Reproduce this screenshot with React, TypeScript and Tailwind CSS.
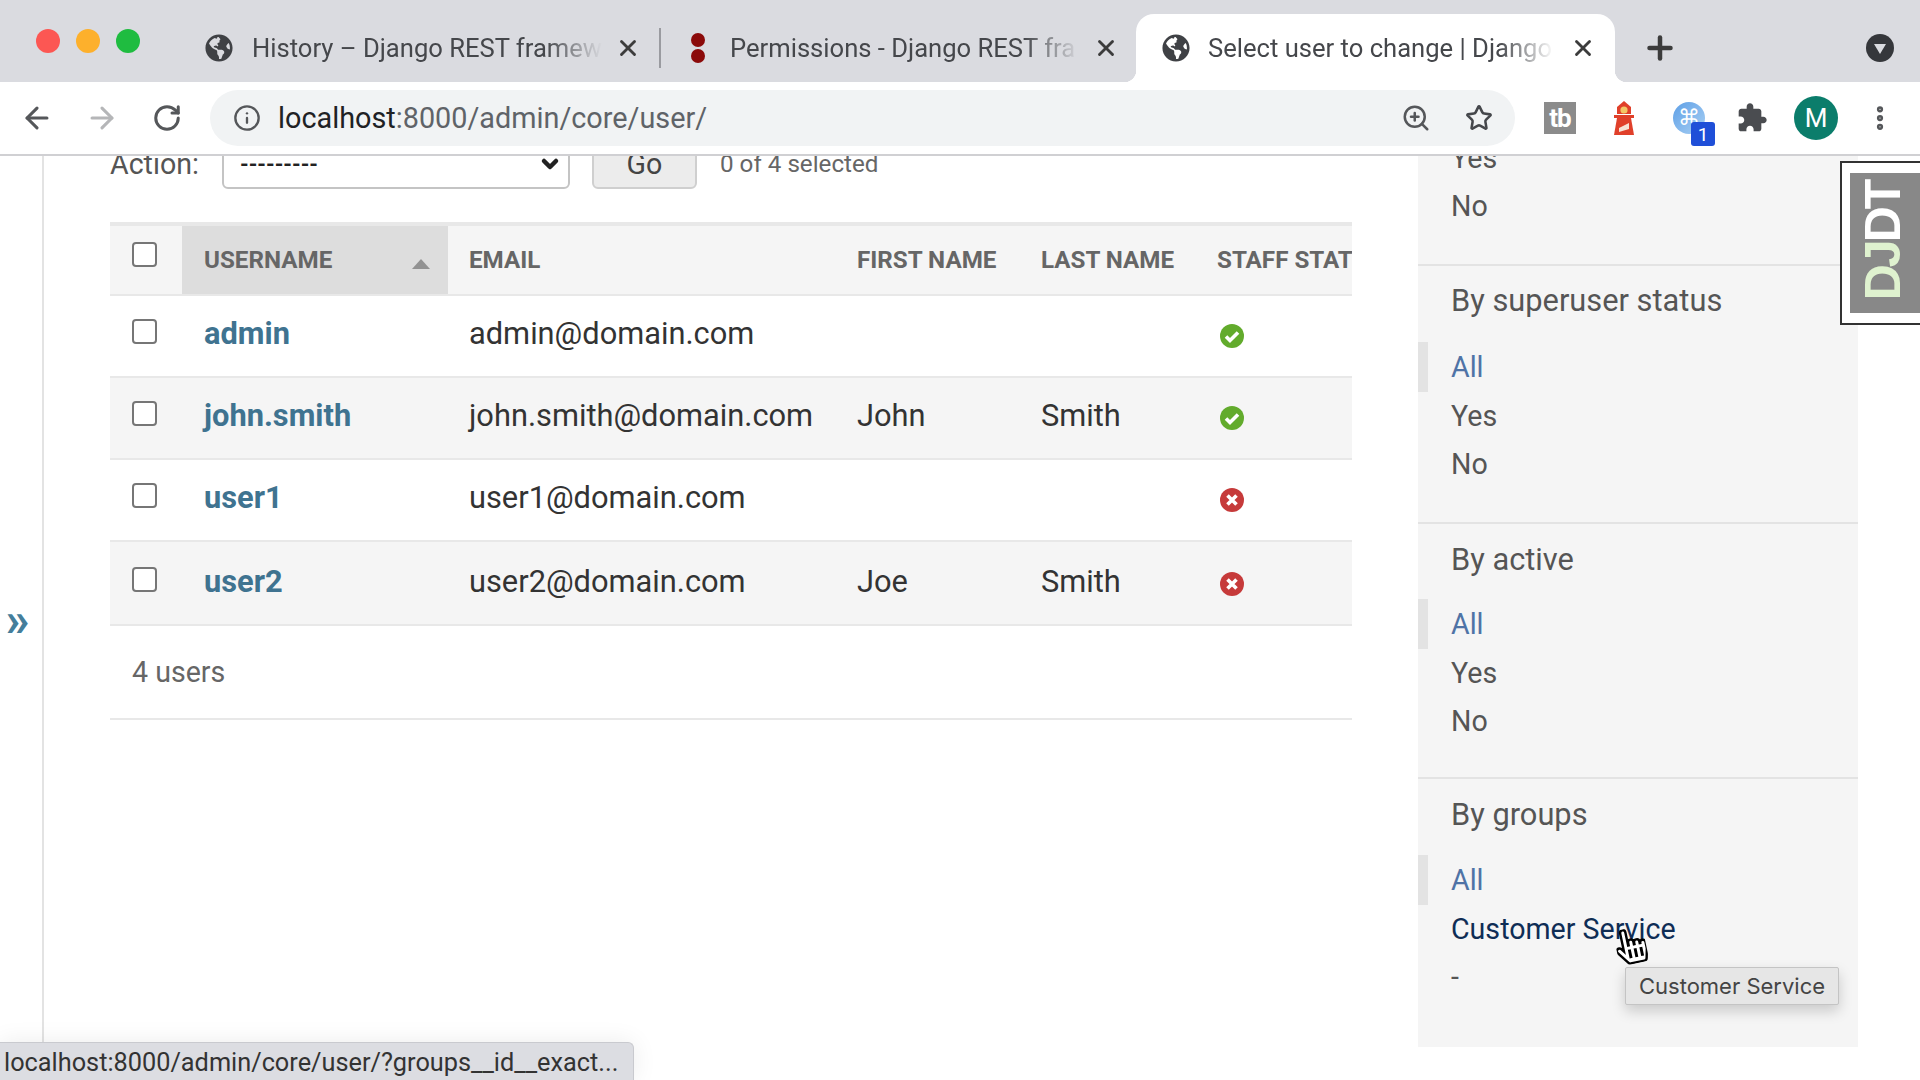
import React from "react";
import { ArrowLeft, ArrowRight, RotateCw, Info, ZoomIn, Star, X, Plus, EllipsisVertical, ChevronDown } from "lucide-react";
import { FaGlobeAmericas, FaHandPointer } from "react-icons/fa";

const fade = "[mask-image:linear-gradient(to_right,black_84%,transparent)]";

function Globe() {
  return <FaGlobeAmericas className="w-[28px] h-[28px] shrink-0 text-[#3f4145]" />;
}

function YesIcon() {
  return (
    <svg viewBox="0 0 24 24" className="w-[24px] h-[24px]">
      <circle cx="12" cy="12" r="12" fill="#62ab2c" />
      <path d="M6 12.5l4 4 8-8" fill="none" stroke="#fff" strokeWidth="3.6" />
    </svg>
  );
}

function NoIcon() {
  return (
    <svg viewBox="0 0 24 24" className="w-[24px] h-[24px]">
      <circle cx="12" cy="12" r="12" fill="#c63a3a" />
      <path d="M7.5 7.5l9 9M16.5 7.5l-9 9" fill="none" stroke="#fff" strokeWidth="3.6" />
    </svg>
  );
}

function Check() {
  return <div className="w-[25px] h-[25px] rounded-[4px] border-2 border-[#767676] bg-white" />;
}

const rowGrid = "grid grid-cols-[72px_266px_409px_184px_176px_135px] items-center";

function Row({ name, email, first, last, ok, h, bg, pb }: { name: string; email: string; first: string; last: string; ok: boolean; h: string; bg: string; pb: string }) {
  return (
    <div className={`${rowGrid} ${h} ${bg} ${pb} border-b-2 border-[#e8e8e8] text-[30.8px] text-[#333]`}>
      <div className="pl-[22px] -mt-[6px]"><Check /></div>
      <a className="pl-[22px] font-bold text-[#3f7390]">{name}</a>
      <div className="pl-[21px] whitespace-nowrap">{email}</div>
      <div>{first}</div>
      <div>{last}</div>
      <div className="pl-[3px] pt-[4px]">{ok ? <YesIcon /> : <NoIcon />}</div>
    </div>
  );
}

function Item({ children, sel, cls }: { children: React.ReactNode; sel?: boolean; cls?: string }) {
  return (
    <div className={`flex items-center text-[28.6px] ${sel ? "h-[50px] border-l-[10px] border-[#e3e3e3] pl-[23px] text-[#4f73a6]" : `h-[48px] pl-[33px] ${cls ?? "text-[#555]"}`}`}>
      {children}
    </div>
  );
}

function Heading({ children }: { children: React.ReactNode }) {
  return <div className="h-[48px] flex items-center pl-[33px] text-[30.8px] text-[#555]">{children}</div>;
}

export default function App() {
  return (
    <div className="w-[1920px] h-[1080px] overflow-hidden bg-white relative font-['Roboto',sans-serif]">
      {/* tab strip */}
      <div className="h-[82px] bg-[#dadbe0] flex items-end">
        <div className="w-[186px] h-full flex gap-[16px] pl-[36px] pt-[29px]">
          <div className="w-[24px] h-[24px] rounded-full bg-[#fc5753]" />
          <div className="w-[24px] h-[24px] rounded-full bg-[#fdb02c]" />
          <div className="w-[24px] h-[24px] rounded-full bg-[#1fbc40]" />
        </div>
        <div className="w-[473px] h-[68px] flex items-center pl-[19px] text-[25.6px] text-[#45474b]">
          <Globe />
          <div className={`ml-[19px] w-[350px] overflow-hidden whitespace-nowrap ${fade}`}>History – Django REST framew</div>
          <X className="ml-[13px] w-[26px] h-[26px] shrink-0 text-[#3c3c3c]" strokeWidth={2.6} />
        </div>
        <div className="w-[477px] h-[68px] flex items-center text-[25.6px] text-[#45474b]">
          <div className="w-[2px] h-[40px] bg-[#9a9ba0] shrink-0" />
          <div className="ml-[30px] w-[14px] flex flex-col gap-[2px] shrink-0">
            <div className="h-[14px] rounded-full bg-[#8b0a0a]" />
            <div className="h-[14px] rounded-full bg-[#8b0a0a]" />
          </div>
          <div className={`ml-[25px] w-[350px] overflow-hidden whitespace-nowrap ${fade}`}>Permissions - Django REST fra</div>
          <X className="ml-[13px] w-[26px] h-[26px] shrink-0 text-[#3c3c3c]" strokeWidth={2.6} />
        </div>
        <div className="relative w-[479px] h-[68px] rounded-t-[18px] bg-white flex items-center pl-[26px] text-[25.6px] text-[#45474b] before:absolute before:bottom-0 before:-left-[12px] before:w-[12px] before:h-[12px] before:bg-[radial-gradient(circle_at_0_0,transparent_12px,white_12.5px)] after:absolute after:bottom-0 after:-right-[12px] after:w-[12px] after:h-[12px] after:bg-[radial-gradient(circle_at_100%_0,transparent_12px,white_12.5px)]">
          <Globe />
          <div className={`ml-[18px] w-[346px] overflow-hidden whitespace-nowrap ${fade}`}>Select user to change | Django</div>
          <X className="ml-[16px] w-[26px] h-[26px] shrink-0 text-[#3c3c3c]" strokeWidth={2.6} />
        </div>
        <div className="h-[68px] flex items-center ml-[27px]">
          <Plus className="w-[36px] h-[36px] text-[#3c3c3c]" strokeWidth={3} />
        </div>
        <div className="h-[68px] flex items-center ml-[188px]">
          <svg viewBox="0 0 28 28" className="w-[28px] h-[28px]">
            <circle cx="14" cy="14" r="14" fill="#35373b" />
            <path d="M8 10h12l-6 10z" fill="#dadbe0" />
          </svg>
        </div>
      </div>

      {/* toolbar */}
      <div className="h-[74px] bg-white border-b-2 border-[#d0d0d3] flex items-center">
        <div className="ml-[5px] w-[64px] flex justify-center"><ArrowLeft className="w-[34px] h-[34px] text-[#55575a]" strokeWidth={2.2} /></div>
        <div className="w-[66px] flex justify-center"><ArrowRight className="w-[34px] h-[34px] text-[#b5b6b8]" strokeWidth={2.2} /></div>
        <div className="w-[64px] flex justify-center"><RotateCw className="w-[30px] h-[30px] text-[#55575a]" strokeWidth={2.4} /></div>
        <div className="ml-[11px] w-[1305px] h-[56px] rounded-full bg-[#f1f3f4] flex items-center pl-[23px] pr-[22px]">
          <Info className="w-[28px] h-[28px] text-[#55575a]" strokeWidth={2} />
          <div className="ml-[17px] pt-[2px] flex-1 text-[28.8px] text-[#5f6368] whitespace-nowrap"><span className="text-[#202124]">localhost</span>:8000/admin/core/user/</div>
          <ZoomIn className="w-[30px] h-[30px] text-[#55575a]" strokeWidth={2} />
          <Star className="ml-[34px] w-[28px] h-[28px] text-[#45474b]" strokeWidth={2.2} />
        </div>
        <div className="ml-[29px] w-[32px] h-[32px] bg-[#8b8b8b] flex items-center justify-center text-white font-bold text-[26px] tracking-[-1px] leading-none">tb</div>
        <div className="ml-[32px] w-[32px] flex justify-center">
          <svg viewBox="0 0 24 34" className="w-[24px] h-[34px]">
            <path d="M12 0l7 6v7H5V6z" fill="#e0402a" />
            <circle cx="12" cy="9" r="3.6" fill="#f3c766" />
            <path d="M2 14h20v3H2z" fill="#e0402a" />
            <path d="M5 17h14l3 17H2z" fill="#e0402a" />
            <path d="M7 27l10-5v6l-10 3z" fill="#f6e3d6" />
          </svg>
        </div>
        <div className="relative ml-[33px] w-[32px] h-[32px] rounded-full bg-gradient-to-br from-[#5d9fe6] to-[#a9d0f3] flex items-center justify-center text-white text-[22px] leading-none">
          ⌘
          <div className="absolute left-[18px] top-[20px] w-[24px] h-[24px] rounded-[3px] bg-[#1f4fd8] flex items-center justify-center text-[19px] text-white">1</div>
        </div>
        <svg viewBox="0 0 24 24" className="ml-[31px] w-[32px] h-[32px]" fill="#4a4c50">
          <path d="M20.5 11H19V7c0-1.1-.9-2-2-2h-4V3.5C13 2.12 11.88 1 10.5 1S8 2.12 8 3.5V5H4c-1.1 0-1.99.9-1.99 2v3.8H3.5c1.49 0 2.7 1.21 2.7 2.7s-1.21 2.7-2.7 2.7H2V20c0 1.1.9 2 2 2h3.8v-1.5c0-1.49 1.21-2.7 2.7-2.7 1.49 0 2.7 1.21 2.7 2.7V22H17c1.1 0 2-.9 2-2v-4h1.5c1.38 0 2.5-1.12 2.5-2.5S21.88 11 20.5 11z" />
        </svg>
        <div className="ml-[26px] w-[44px] h-[44px] rounded-full bg-[#0b7d6b] flex items-center justify-center text-[26px] text-white">M</div>
        <EllipsisVertical className="ml-[27px] w-[30px] h-[36px] text-[#55575a]" strokeWidth={3} />
      </div>

      {/* page */}
      <div className="relative h-[924px] flex overflow-hidden">
        <div className="w-[44px] shrink-0 border-r-2 border-[#e3e3e3] flex items-center justify-center pr-[7px] pt-[3px] text-[48px] font-bold text-[#447e9b] leading-none">»</div>

        <div className="w-[1242px] ml-[66px] shrink-0">
          <div className="-mt-[17px] h-[50px] flex items-center text-[#555]">
            <span className="text-[28.6px] w-[112px]">Action:</span>
            <div className="w-[348px] h-[50px] rounded-[6px] border-2 border-[#c4c4c4] bg-white flex items-center justify-between pl-[16px] pr-[6px] text-[#222] font-bold text-[22px] shrink-0">
              ---------
              <ChevronDown className="w-[24px] h-[24px] text-[#222]" strokeWidth={4.5} />
            </div>
            <div className="ml-[22px] w-[105px] h-[50px] rounded-[6px] border-2 border-[#cfcfcf] bg-[#ececec] flex items-center justify-center text-[28.6px] text-[#444] shrink-0">Go</div>
            <span className="ml-[23px] text-[24.2px] text-[#666] whitespace-nowrap">0 of 4 selected</span>
          </div>

          <div className="mt-[33px] overflow-hidden">
            <div className={`${rowGrid} h-[74px] border-t-4 border-b-2 border-[#e8e8e8] bg-[#f5f5f5] text-[24.2px] font-bold text-[#666] whitespace-nowrap`}>
              <div className="pl-[22px] -mt-[11px]"><Check /></div>
              <div className="h-full bg-[#dddddd] pl-[22px] flex items-center justify-between pr-[18px]">
                USERNAME
                <svg viewBox="0 0 18 10" className="w-[18px] h-[10px] mt-[8px]"><path d="M9 0l9 10H0z" fill="#929292" /></svg>
              </div>
              <div className="pl-[21px]">EMAIL</div>
              <div>FIRST NAME</div>
              <div>LAST NAME</div>
              <div className="overflow-hidden">STAFF STAT</div>
            </div>
            <Row name="admin" email="admin@domain.com" first="" last="" ok h="h-[82px]" bg="bg-white" pb="pb-[4px]" />
            <Row name="john.smith" email="john.smith@domain.com" first="John" last="Smith" ok h="h-[82px]" bg="bg-[#f5f5f5]" pb="pb-[4px]" />
            <Row name="user1" email="user1@domain.com" first="" last="" ok={false} h="h-[82px]" bg="bg-white" pb="pb-[4px]" />
            <Row name="user2" email="user2@domain.com" first="Joe" last="Smith" ok={false} h="h-[84px]" bg="bg-[#f5f5f5]" pb="pb-[2px]" />
          </div>

          <div className="h-[94px] border-b-2 border-[#e8e8e8] flex items-center pl-[22px] text-[28.6px] text-[#666]">4 users</div>
        </div>

        <div className="ml-[66px] w-[440px] h-[891px] shrink-0 bg-[#f5f5f5] overflow-hidden">
          <div className="-mt-[22px] h-[130px]">
            <Item>Yes</Item>
            <Item>No</Item>
          </div>
          <div className="border-t-2 border-[#e3e3e3] pt-[11px] pb-[34px]">
            <Heading>By superuser status</Heading>
            <div className="mt-[17px]"><Item sel>All</Item></div>
            <Item>Yes</Item>
            <Item>No</Item>
          </div>
          <div className="border-t-2 border-[#e3e3e3] pt-[12px] pb-[32px]">
            <Heading>By active</Heading>
            <div className="mt-[15px]"><Item sel>All</Item></div>
            <Item>Yes</Item>
            <Item>No</Item>
          </div>
          <div className="border-t-2 border-[#e3e3e3] pt-[12px]">
            <Heading>By groups</Heading>
            <div className="mt-[16px]"><Item sel>All</Item></div>
            <Item cls="text-[#0f2d55]">Customer Service</Item>
            <Item>-</Item>
          </div>
        </div>

        {/* debug toolbar handle */}
        <div className="absolute left-[1840px] top-[5px] w-[80px] h-[164px] border-2 border-r-0 border-[#333] bg-white pl-[8px] py-[10px]">
          <div className="h-full bg-[#888] flex items-center justify-center overflow-hidden pb-[4px] pr-[3px]">
            <div className="-rotate-90 whitespace-nowrap font-['Liberation_Sans',sans-serif] font-bold text-[50px] tracking-[-3px] leading-none text-white">
              <span className="text-[#dff2cf]">DJ</span>DT
            </div>
          </div>
        </div>

        {/* hand cursor */}
        <FaHandPointer className="absolute left-[1616px] top-[772px] w-[30px] h-[36px] text-white -rotate-12" stroke="#000" strokeWidth={36} />

        {/* tooltip */}
        <div className="absolute left-[1625px] top-[811px] w-[214px] h-[38px] rounded-[2px] border border-[#c4c4c4] bg-[#e6e6e6] shadow-[0_6px_14px_rgba(0,0,0,0.18)] flex items-center justify-center text-[22px] text-[#444] font-['Inter',sans-serif]">
          Customer Service
        </div>

        {/* status bubble */}
        <div className="absolute left-0 bottom-0 w-[634px] h-[38px] rounded-tr-[6px] border-t border-r border-[#c9cacf] bg-[#dcdde2] shadow-[0_0_24px_rgba(0,0,0,0.08)] flex items-center pl-[4px] pt-[3px] text-[25.3px] text-[#333] whitespace-nowrap">
          localhost:8000/admin/core/user/?groups__id__exact...
        </div>
      </div>
    </div>
  );
}
